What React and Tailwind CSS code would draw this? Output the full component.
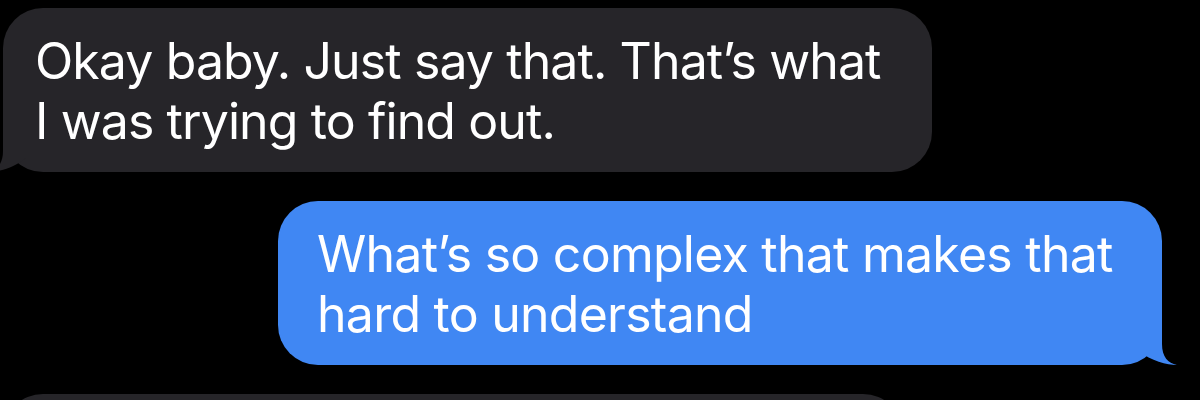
import { Fragment } from "react";

const messages = [
    {
        id: 1,
        fromMe: false,
        lines: ["Okay baby. Just say that. That’s what", "I was trying to find out."],
        width: "w-[929px]"
    },
    {
        id: 2,
        fromMe: true,
        lines: ["What’s so complex that makes that", "hard to understand"],
        width: "w-[884px]"
    }
];

// little curled tail under the bubble corner
function Tail({ fromMe }) {
    return (
        <svg
            width="40"
            height="46"
            viewBox="0 0 40 46"
            className={
                fromMe
                    ? "absolute -right-[15px] bottom-0"
                    : "absolute -left-[15px] bottom-0 -scale-x-100"
            }
        >
            <path
                d="M25 0 L25 25 C25 38 31 44 40 46 C30 46 14 42 2 32 L2 0 Z"
                fill={fromMe ? "#4087f3" : "#262529"}
            />
        </svg>
    );
}

function Bubble({ msg }) {
    return (
        <div
            className={
                "relative rounded-[40px] pr-[30px] pt-[23px] pb-[21px] text-[50px] leading-[60px] text-white whitespace-nowrap " +
                msg.width +
                (msg.fromMe
                    ? " self-end mr-[38px] bg-[#4087f3] pl-[39px] tracking-[-0.75px]"
                    : " ml-[3px] bg-[#262529] pl-[32px] tracking-[-0.9px]")
            }
        >
            {msg.lines.map((line, i) => (
                <Fragment key={i}>
                    {i > 0 && <br />}
                    {line}
                </Fragment>
            ))}
            <Tail fromMe={msg.fromMe} />
        </div>
    );
}

export default function App() {
    return (
        <div className="h-[400px] w-[1200px] overflow-hidden bg-black [font-family:Inter,'Noto_Sans',sans-serif]">
            <div className="flex flex-col gap-[29px] pt-[8px]">
                {messages.map((msg) => (
                    <Bubble key={msg.id} msg={msg} />
                ))}
                <div className="ml-[3px] h-[100px] w-[900px] shrink-0 rounded-[40px] bg-[#262529]" />
            </div>
        </div>
    );
}
